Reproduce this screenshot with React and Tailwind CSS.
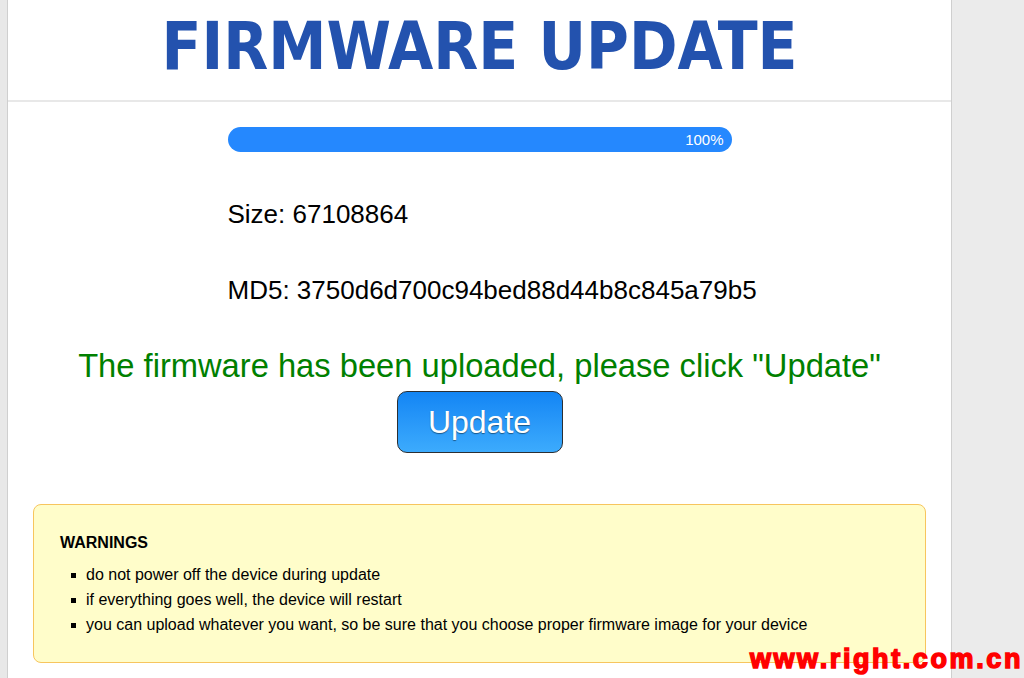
const warnings = [
  'do not power off the device during update',
  'if everything goes well, the device will restart',
  'you can upload whatever you want, so be sure that you choose proper firmware image for your device',
];

const App = () => {
  return (
    <div className="relative flex h-[678px] w-[1024px] overflow-hidden bg-[#ebebeb] font-['Liberation_Sans',Arial,sans-serif] text-black">
      <div className="w-[8px] shrink-0 border-r border-[#cfcfcf] bg-[#e8e8e8]" />
      <div className="w-[943px] shrink-0 bg-white">
        <header className="flex h-[102px] items-center justify-center border-b-2 border-[#e8e8e8]">
          <h1 className="pb-[8px] font-['DejaVu_Sans_Condensed','DejaVu_Sans',sans-serif] text-[65px] font-bold leading-none text-[#2352ae]">
            FIRMWARE UPDATE
          </h1>
        </header>

        <div className="mx-auto mt-[25px] flex h-[25px] w-[504px] items-center justify-end rounded-full bg-[#2588fe] pr-[8px]">
          <span className="text-[15px] leading-none text-white">100%</span>
        </div>

        <div className="mx-auto w-[504px]">
          <p className="mt-[47px] text-[26px] leading-[30px]">Size: 67108864</p>
          <p className="mt-[46px] whitespace-nowrap text-[26px] leading-[30px]">MD5: 3750d6d700c94bed88d44b8c845a79b5</p>
        </div>

        <p className="mt-[41px] text-center text-[32.7px] leading-[40px] text-[#008000]">
          The firmware has been uploaded, please click "Update"
        </p>

        <div className="mt-[5px] flex justify-center">
          <button className="h-[62px] w-[166px] rounded-[10px] border-[1.5px] border-[#2b2f33] bg-gradient-to-b from-[#1285f4] to-[#3cabfd] text-[32px] leading-none text-white [text-shadow:0_1px_1px_rgba(0,0,0,0.45)]">
            Update
          </button>
        </div>

        <div className="mx-[25px] mt-[51px] h-[159px] rounded-[8px] border border-[#f7c55e] bg-[#fffdca] px-[26px] pt-[28px]">
          <h2 className="text-[16px] font-bold leading-[20px]">WARNINGS</h2>
          <ul className="mt-[9px] pl-[11px]">
            {warnings.map((w) => (
              <li key={w} className="flex items-center gap-[10px] text-[16px] leading-[25px]">
                <span className="mt-[1px] h-[5px] w-[5px] shrink-0 bg-black" />
                <span>{w}</span>
              </li>
            ))}
          </ul>
        </div>
      </div>
      <div className="w-px shrink-0 bg-[#cfcfcf]" />

      <span className="absolute bottom-[5px] right-[1px] text-[27px] font-bold leading-none tracking-[2.6px] text-[#ff0000] [-webkit-text-stroke:1.5px_#ff0000]">
        www.right.com.cn
      </span>
    </div>
  );
};

export default App;
